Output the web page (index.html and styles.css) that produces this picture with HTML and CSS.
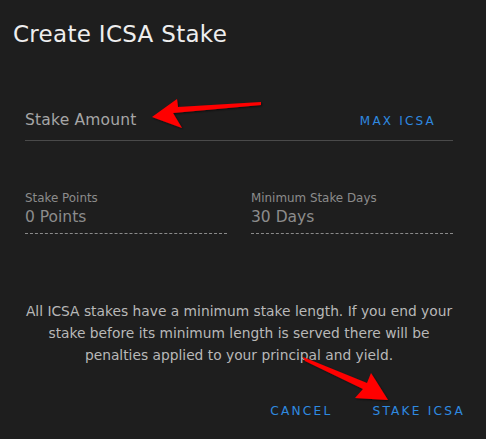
FILE: index.html
```html
<!DOCTYPE html>
<html>
<head>
<meta charset="utf-8">
<link rel="stylesheet" href="styles.css">
</head>
<body>
<div class="dialog">
  <h1 class="title">Create ICSA Stake</h1>
  <div class="content">
    <div class="amount-field">
      <span class="amount-label">Stake Amount</span>
      <span class="link">MAX ICSA</span>
    </div>
    <div class="stats">
      <div class="stat">
        <div class="stat-label">Stake Points</div>
        <div class="stat-value">0 Points</div>
      </div>
      <div class="stat">
        <div class="stat-label">Minimum Stake Days</div>
        <div class="stat-value">30 Days</div>
      </div>
    </div>
    <p class="note">All ICSA stakes have a minimum stake length. If you end your stake before its minimum length is served there will be penalties applied to your principal and yield.</p>
  </div>
  <div class="actions">
    <span class="link btn">CANCEL</span>
    <span class="link btn">STAKE ICSA</span>
  </div>
</div>
<svg class="annotations" width="486" height="439" viewBox="0 0 486 439">
  <defs>
    <filter id="sh" x="-20%" y="-20%" width="140%" height="140%">
      <feDropShadow dx="1" dy="1" stdDeviation="1" flood-color="#000" flood-opacity="0.6"/>
    </filter>
  </defs>
  <polygon filter="url(#sh)" fill="#ff0000" points="152,117 177,99 178,107 261,102 261,105 173,113 182,128"/>
  <polygon filter="url(#sh)" fill="#ff0000" points="303,357 367,383 371,373 388,400 355,398 363,389 305,361"/>
</svg>
</body>
</html>
```
FILE: styles.css
```css
html, body {
  margin: 0;
  padding: 0;
  background: #1e1e1e;
}
body {
  width: 486px;
  height: 439px;
  overflow: hidden;
  position: relative;
  font-family: "DejaVu Sans", "Open Sans", sans-serif;
}
.dialog {
  display: flex;
  flex-direction: column;
  padding: 18px 23px 0 13px;
}
.title {
  margin: 0;
  font-size: 23px;
  letter-spacing: 0.3px;
  line-height: 32px;
  font-weight: 400;
  color: #eeeeee;
}
.content {
  display: flex;
  flex-direction: column;
  padding: 0 10px 0 12px;
}
.amount-field {
  display: flex;
  justify-content: space-between;
  align-items: baseline;
  margin-top: 58px;
  padding: 0 17px 8px 0;
  border-bottom: 1px solid #4a4a4a;
}
.amount-label {
  font-size: 15.5px;
  letter-spacing: 0.2px;
  line-height: 24px;
  color: #a6a6a6;
}
.link {
  font-size: 12px;
  font-weight: 400;
  letter-spacing: 2.2px;
  color: #2f8ae0;
}
.stats {
  display: grid;
  grid-template-columns: 1fr 1fr;
  column-gap: 24px;
  margin-top: 49px;
}
.stat {
  border-bottom: 1px dashed #8a8a8a;
  padding-bottom: 5px;
}
.stat-label {
  font-size: 11.9px;
  line-height: 16px;
  color: #8c8c8c;
}
.stat-value {
  font-size: 15.5px;
  line-height: 22px;
  color: #8c8c8c;
}
.note {
  margin: 66px 0 0;
  text-align: center;
  font-size: 13.8px;
  line-height: 22px;
  color: #b8b8b8;
}
.actions {
  display: flex;
  justify-content: flex-end;
  gap: 40px;
  margin-top: 38px;
  margin-right: -2px;
}
.btn {
  font-size: 12.2px;
}
.annotations {
  position: absolute;
  left: 0;
  top: 0;
  pointer-events: none;
}
```
